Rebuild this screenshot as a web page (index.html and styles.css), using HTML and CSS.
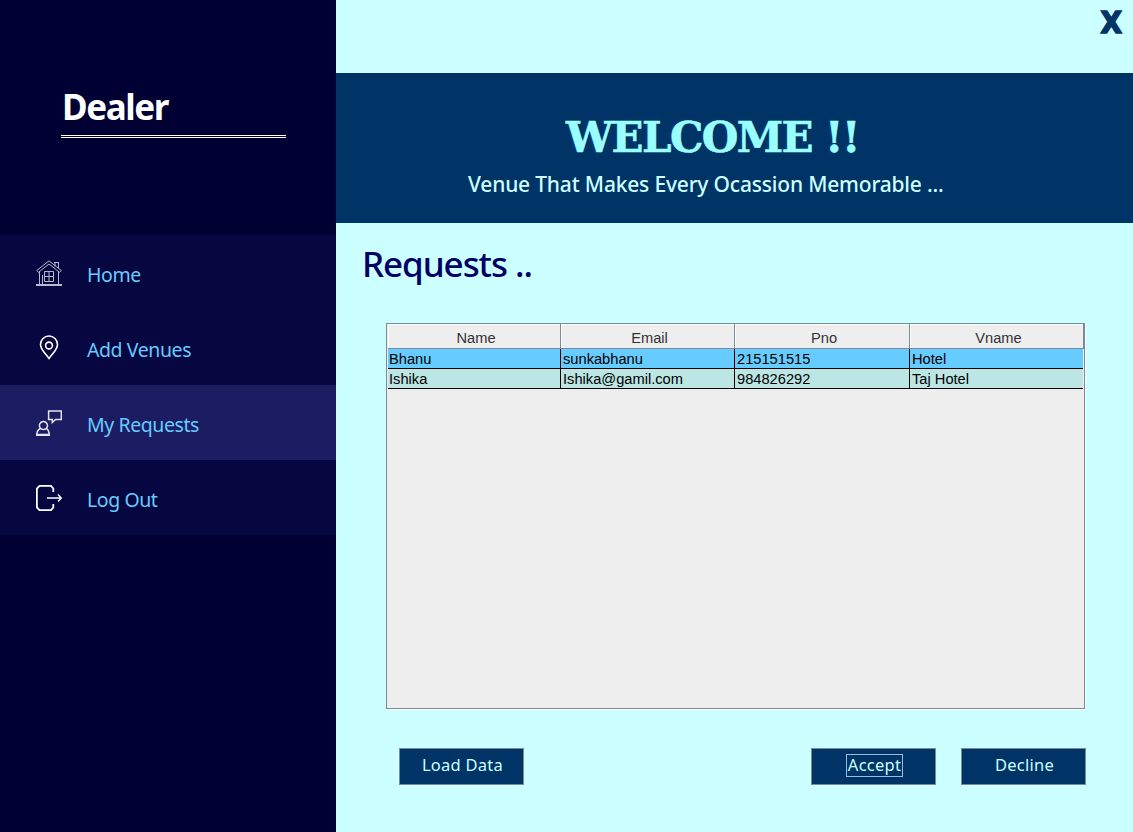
FILE: index.html
```html
<!DOCTYPE html>
<html lang="en">
<head>
<meta charset="utf-8">
<title>Dealer</title>
<link rel="stylesheet" href="styles.css">
</head>
<body>
<div class="app">
  <aside class="sidebar">
    <div class="brand"><span class="brand-name">Dealer</span></div>
    <nav class="menu">
      <a class="item">
        <svg class="icon" viewBox="0 0 26 26" fill="none" stroke="#b9b9c9" stroke-width="1"><path d="M.7 10.500 13 .9l12.300 9.600M2.500 12.300 13 4l10.500 8.300M.7 10.500l1.800 1.800M25.300 10.500l-1.800 1.800M3.500 12v12.500M22.500 12v12.500M6.500 15v9.500M19 3v3.500M22.500 3v5M18 2.500h5M8.500 11.500h9v10h-9zM13 11.500v10M8.500 16.500h9"/><path d="M0 25h26" stroke-width="2"/></svg>
        <span>Home</span></a>
      <a class="item">
        <svg class="icon" viewBox="0 0 26 26" fill="none" stroke="#fff" stroke-width="1.600"><path d="M13 23.500C9 18 4.500 14.500 4.500 9.500a8.500 8.500 0 0 1 17 0c0 5-4.500 8.500-8.500 14z"/><circle cx="13" cy="10.500" r="3.400"/></svg>
        <span>Add Venues</span></a>
      <a class="item active">
        <svg class="icon" viewBox="0 0 26 26" fill="none" stroke="#e4e4ee" stroke-width="1.500"><path d="M12.600 1h12.700v8.500h-5.800l-3.200 3V9.500h-3.700zM7.500 11.500a4 4 0 1 1-.1 0zM4.500 18.500C2 19.500 1 21 .7 24.500h12.600C13 21 12 19.500 10.500 18.500"/><path d="M0 25h14" stroke-width="2"/></svg>
        <span>My Requests</span></a>
      <a class="item">
        <svg class="icon" viewBox="0 0 26 26" fill="none" stroke="#fff" stroke-width="1.800"><path d="M17.300 7V3.500L15 .9H3.500L.9 3.500v19l2.600 2.600H15l2.300-2.600V19"/><path d="M11 13h14M22 9.500l3.300 3.500-3.300 3.500" stroke-width="1.300"/></svg>
        <span>Log Out</span></a>
    </nav>
  </aside>
  <main class="main">
    <div class="topbar"><span class="close">X</span></div>
    <header class="banner">
      <h1 class="welcome">WELCOME !!</h1>
      <p class="tagline">Venue That Makes Every Ocassion Memorable ...</p>
    </header>
    <h2 class="heading">Requests ..</h2>
    <div class="table-frame">
      <div class="row head"><div>Name</div><div>Email</div><div>Pno</div><div>Vname</div></div>
      <div class="row body selected"><div>Bhanu</div><div>sunkabhanu</div><div>215151515</div><div>Hotel</div></div>
      <div class="row body"><div>Ishika</div><div>Ishika@gamil.com</div><div>984826292</div><div>Taj Hotel</div></div>
    </div>
    <div class="actions">
      <button class="btn load">Load Data</button>
      <button class="btn"><span class="focus">Accept</span></button>
      <button class="btn">Decline</button>
    </div>
  </main>
</div>
</body>
</html>
```
FILE: styles.css
```css
* { box-sizing: border-box; }
body { margin: 0; font-family: "Noto Sans", sans-serif; }
.app { display: flex; width: 1133px; height: 832px; overflow: hidden; }
.sidebar { width: 336px; background: #000033; }
.brand { height: 235px; padding: 83px 0 0 61px; }
.brand-name { display: block; width: 225px; height: 55px; padding-left: 1px; border-bottom: 3px double #fff; color: #fff; font-size: 35px; font-weight: 700; line-height: 48px; letter-spacing: -1.400px; }
.item { display: flex; align-items: center; height: 75px; padding-left: 36px; background: #060640; color: #66ccff; font-size: 19.500px; line-height: 28px; letter-spacing: -.42px; }
.item span { padding: 5px 0 0 25px; }
.item.active { background: #1c1c62; }
.icon { width: 26px; height: 26px; }
.main { flex: 1; background: #ccffff; }
.topbar { display: flex; justify-content: flex-end; height: 73px; padding: 6px 11px 0 0; }
.close { color: #003366; font-family: "DejaVu Sans Condensed", "DejaVu Sans", sans-serif; font-size: 31px; font-weight: 700; line-height: 33px; -webkit-text-stroke: 1.500px #003366; }
.banner { height: 150px; padding-top: 38px; background: #003366; }
.welcome { margin: 0 0 0 230px; color: #99ffff; font-family: "DejaVu Serif", serif; font-size: 42px; font-weight: 700; line-height: 54px; letter-spacing: -1.600px; white-space: pre; -webkit-text-stroke: .6px #99ffff; }
.tagline { margin: 4px 0 0 132px; color: #ccffff; font-size: 21px; font-weight: 500; line-height: 30px; letter-spacing: -.19px; white-space: nowrap; }
.heading { margin: 16px 0 0 26px; height: 84px; color: #000066; font-size: 35px; font-weight: 500; line-height: 50px; letter-spacing: -1.060px; }
.table-frame { width: 699px; height: 386px; margin-left: 50px; padding-left: 1px; background: #eee; border: 1px solid #7a8a99; box-shadow: 1px 1px 0 #fff; font-family: "Liberation Sans", Arial, sans-serif; font-size: 14.670px; }
.row { display: grid; grid-template-columns: 173px 174px 175px 174px; width: 696px; }
.head { color: #333; font-size: 14.670px; }
.head div { height: 25px; border: solid #7a8a99; border-width: 0 1px 1px 0; box-shadow: inset 1px 1px 0 #fff; text-align: center; line-height: 28px; padding-left: 4px; }
.body div { height: 20px; padding-left: 2px; border: solid #000; border-width: 0 1px 1px 0; background: #bbe6e4; color: #000; line-height: 20px; }
.body div:first-child { padding-left: 1px; }
.body div:last-child { margin-right: 1px; border-right: 0; }
.selected div { background: #66ccff; }
.actions { display: flex; gap: 25px; margin: 39px 47px 0 63px; }
.load { margin-right: auto; }
.btn { width: 125px; height: 37px; padding: 0 0 3px 2px; border: 1px solid #7a8a99; background: #003366; color: #ccffff; font-family: "Noto Sans", sans-serif; font-size: 16.500px; line-height: 22px; letter-spacing: .25px; }
.focus { display: inline-block; height: 23px; padding: 0 1px; border: 1px solid #99bbdd; line-height: 20px; }
```
